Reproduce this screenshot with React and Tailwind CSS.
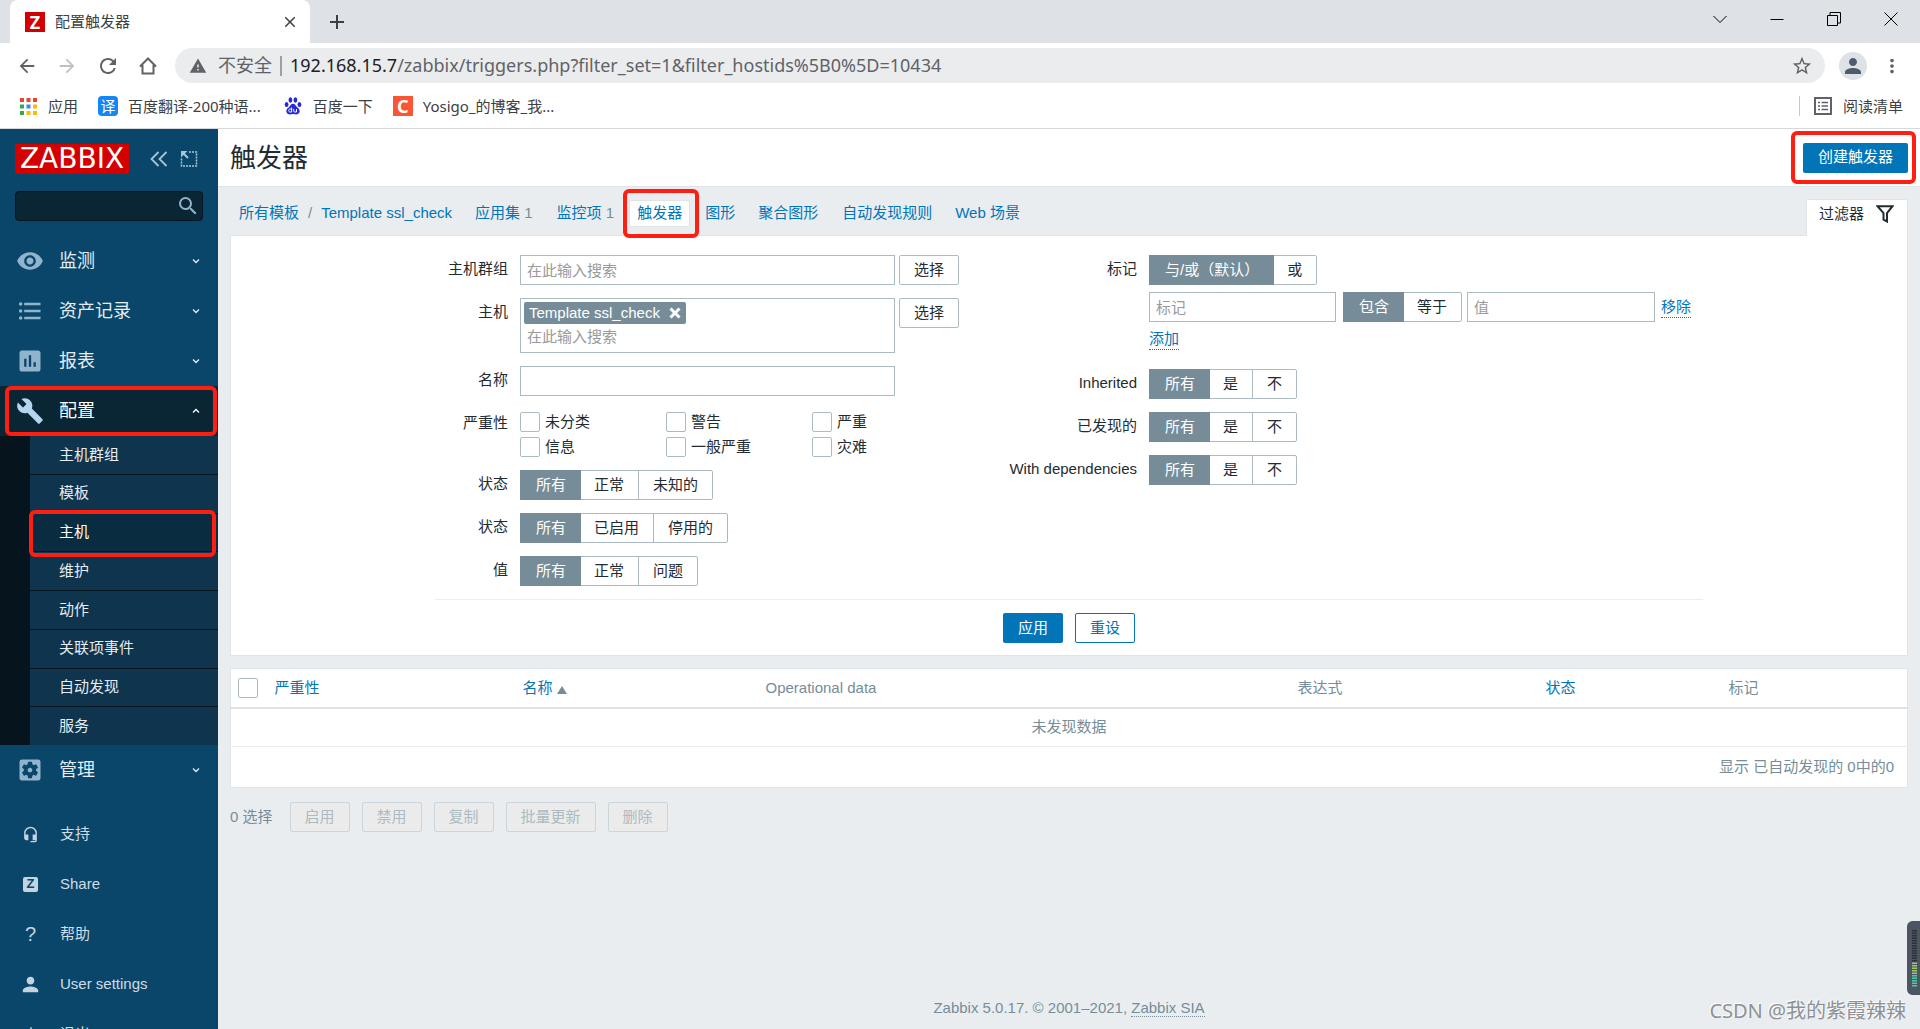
import { useState } from 'react';
import {
  MdAdd, MdArrowBack, MdArrowForward, MdAssessment, MdBuild, MdClose, MdFormatListBulleted,
  MdHeadsetMic, MdMoreVert, MdPerson, MdPowerSettingsNew, MdRefresh, MdSearch,
  MdSettingsApplications, MdStarBorder, MdVisibility, MdWarning,
} from 'react-icons/md';

const UI_FONT = "font-['Noto_Sans','Noto_Sans_CJK_SC',sans-serif]";
const PAGE_FONT = "font-['Liberation_Sans','Noto_Sans_CJK_SC',sans-serif]";

const SUBMENU = ['主机群组', '模板', '主机', '维护', '动作', '关联项事件', '自动发现', '服务'];

/* ---------- icons ---------- */

function HomeIcon() {
  return (
    <svg className="size-5" viewBox="0 0 20 20" fill="none" stroke="currentColor" strokeWidth="2">
      <path d="M2 10.500 10 2.500l8 8M4.500 9v8.500h11V9" />
    </svg>
  );
}

function AppsIcon() {
  const colors = ['#ea4335', '#ea4335', '#ea4335', '#34a853', '#4285f4', '#fbbc04', '#34a853', '#fbbc04', '#fbbc04'];
  return (
    <svg className="size-[17px]" viewBox="0 0 17 17">
      {colors.map((c, i) => (
        <rect key={i} x={(i % 3) * 6.5} y={Math.floor(i / 3) * 6.5} width="4" height="4" fill={c} />
      ))}
    </svg>
  );
}

function PawIcon() {
  return (
    <svg className="size-[18px]" viewBox="0 0 18 18" fill="#2529d8">
      <ellipse cx="2.6" cy="7.4" rx="1.9" ry="2.5" />
      <ellipse cx="6.4" cy="3" rx="1.9" ry="2.7" />
      <ellipse cx="11.4" cy="3" rx="1.9" ry="2.7" />
      <ellipse cx="15.4" cy="7.6" rx="1.9" ry="2.5" />
      <path d="M9 6.8c1.9 0 2.6 1.7 3.7 3 1.200 1.300 3 2.100 3 4.300 0 2-1.400 3.300-3.200 3.300-1.300 0-2.200-.4-3.500-.4s-2.200.4-3.500.4c-1.800 0-3.200-1.300-3.200-3.300 0-2.200 1.800-3 3-4.300 1.100-1.300 1.800-3 3.700-3z" />
      <path d="M7.600 10.500v4.500H6.200c-.9 0-1.500-.6-1.500-1.500s.6-1.500 1.500-1.500h1.400M9.700 12v1.900c0 .7.4 1.100 1 1.100h1.800v-3" fill="none" stroke="#fff" strokeWidth="1" />
    </svg>
  );
}

function ReadingListIcon() {
  return (
    <svg className="size-[18px] text-[#5f6368]" viewBox="0 0 18 18" fill="none" stroke="currentColor" strokeWidth="2">
      <path d="M1 1h16v16H1z" />
      <path d="M4 5.500h2M4 9h2M4 12.500h2M7.500 5.500h6.500M7.500 9h6.500M7.500 12.500h6.500" strokeWidth="1.500" />
    </svg>
  );
}

// Arrow pointing out of a dotted frame
function KioskIcon() {
  return (
    <svg className="size-[18px]" viewBox="0 0 18 18" fill="none" stroke="currentColor" strokeWidth="1.500">
      <path d="M9 2h7.500v14H1.500V8.500" strokeDasharray="2 1" />
      <path d="M3 3l5 5" strokeWidth="2" />
      <path d="M1 1h6.500L1 7.500z" fill="currentColor" stroke="none" />
    </svg>
  );
}

function CollapseIcon() {
  return (
    <svg className="size-[18px]" viewBox="0 0 18 18" fill="none" stroke="currentColor" strokeWidth="1.800">
      <path d="M8.500 2 1.500 9l7 7M16.500 2l-7 7 7 7" />
    </svg>
  );
}

function Caret({ up }) {
  return (
    <svg className="w-2 h-[6px]" viewBox="0 0 8 6" fill="none" stroke="currentColor" strokeWidth="1.300">
      <path d={up ? 'M1 4.500l3-3 3 3' : 'M1 1.500l3 3 3-3'} />
    </svg>
  );
}

function FunnelIcon() {
  return (
    <svg className="size-[18px]" viewBox="0 0 18 18" fill="none" stroke="#1f2c33" strokeWidth="2">
      <path d="M1.500 1.200h15l-5.500 7v8.300l-3.500-1.800V8.200z" />
    </svg>
  );
}

/* ---------- small pieces ---------- */

// Red frame around its relative parent
function Mark({ className }) {
  return <span className={`absolute border-4 border-[#ff1e12] rounded-md pointer-events-none z-10 ${className}`} />;
}

function Segmented({ name, label, options }) {
  const [value, setValue] = useState(options[0]);
  return (
    <div role="radiogroup" aria-label={label} className="inline-flex h-[30px] rounded-xs border border-[#acbbc2] bg-white">
      {options.map((o, i) => (
        <label
          key={o}
          className={`relative flex items-center pr-[14px] whitespace-nowrap ${i > 0 ? 'pl-[14px]' : 'pl-[15px]'} ${i > 1 ? 'border-l border-[#acbbc2]' : ''} ${value === o ? 'bg-[#768d99] text-white outline outline-[#768d99]' : ''}`}
        >
          <input type="radio" name={name} className="sr-only" checked={value === o} onChange={() => setValue(o)} />
          {o}
        </label>
      ))}
    </div>
  );
}

function Row({ label, htmlFor, labelWidth, className = '', children }) {
  return (
    <div className={`flex gap-3 ${className}`}>
      <label htmlFor={htmlFor} className={`${labelWidth} shrink-0 text-right leading-[28px] whitespace-nowrap`}>{label}</label>
      <div className="grow">{children}</div>
    </div>
  );
}

const CHECKBOX = 'appearance-none shrink-0 size-5 rounded-xs border border-[#acbbc2] bg-white checked:bg-[#768d99]';
const INPUT = 'h-[30px] border border-[#acbbc2] bg-white px-[6px] placeholder:text-[#9a9a9a] outline-none';

function SelectButton() {
  return <button type="button" className="h-[30px] w-[60px] shrink-0 rounded-xs border border-[#acbbc2] bg-white">选择</button>;
}

/* ---------- browser chrome ---------- */

function Browser() {
  return (
    <header className={`${UI_FONT} shrink-0 bg-white text-[15px] text-[#3c4043]`}>
      <div className="flex h-[43px] bg-[#dee1e6] pl-[10px]">
        <div className="flex w-[300px] items-center rounded-t-lg bg-white pl-[15px] pr-[11px]">
          <span className="flex size-5 items-center justify-center bg-[#d40000] text-lg font-bold text-white">Z</span>
          <span className="ml-[10px] grow">配置触发器</span>
          <button aria-label="关闭标签页"><MdClose className="size-[18px]" /></button>
        </div>
        <button aria-label="新标签页" className="ml-[15px]"><MdAdd className="size-6" /></button>
        <div className="ml-auto flex items-center pb-[6px] text-black">
          <button aria-label="搜索标签页" className="flex w-[57px] justify-center">
            <svg className="size-[14px]" viewBox="0 0 14 14" fill="none" stroke="currentColor"><path d="M.500 4l6.500 6.500L13.500 4" /></svg>
          </button>
          <button aria-label="最小化" className="flex w-[57px] justify-center">
            <svg className="size-[14px]" viewBox="0 0 14 14" stroke="currentColor"><path d="M.500 7.500h13" /></svg>
          </button>
          <button aria-label="还原" className="flex w-[57px] justify-center">
            <svg className="size-[14px]" viewBox="0 0 14 14" fill="none" stroke="currentColor"><path d="M.500 3.500h10v10H.500zM3 3.500v-3h10.500V11h-3" /></svg>
          </button>
          <button aria-label="关闭" className="flex w-[58px] justify-center">
            <svg className="size-[14px]" viewBox="0 0 14 14" stroke="currentColor"><path d="M.500.500l13 13M13.500.500l-13 13" /></svg>
          </button>
        </div>
      </div>

      <div className="flex h-[45px] items-center pl-4 pr-[17px] text-[#5f6368]">
        <div className="flex w-[159px] items-center gap-[18px]">
          <button aria-label="后退"><MdArrowBack className="size-[22px]" /></button>
          <button aria-label="前进" className="text-[#bdc1c6]"><MdArrowForward className="size-[22px]" /></button>
          <button aria-label="重新加载"><MdRefresh className="size-6" /></button>
          <button aria-label="主页"><HomeIcon /></button>
        </div>
        <div className="flex h-[35px] grow items-center rounded-full bg-[#ebecee] pl-[14px] pr-3 text-[18px]">
          <MdWarning className="size-[18px]" />
          <span className="ml-[11px]">不安全</span>
          <span className="mx-[8px] h-5 w-[2px] bg-[#9aa0a6]" />
          <span className="grow"><span className="text-[#202124]">192.168.15.7</span>/zabbix/triggers.php?filter_set=1&amp;filter_hostids%5B0%5D=10434</span>
          <button aria-label="为此标签页添加书签"><MdStarBorder className="size-[22px]" /></button>
        </div>
        <span className="ml-[14px] flex size-7 items-center justify-center rounded-full bg-[#dee1e6] text-[#4e5b6e]"><MdPerson className="size-6" /></span>
        <button aria-label="更多" className="ml-[14px]"><MdMoreVert className="size-[22px]" /></button>
      </div>

      <nav className="flex h-[41px] items-center border-b border-[#d5d8dc] pb-1 pl-5 pr-[17px]">
        <a href="#apps" className="flex items-center gap-[11px]"><AppsIcon />应用</a>
        <a href="#fanyi" className="ml-5 flex items-center gap-[10px]">
          <span className="flex size-5 items-center justify-center rounded-sm bg-[#1487f5] text-white">译</span>百度翻译-200种语...
        </a>
        <a href="#baidu" className="ml-[23px] flex items-center gap-[11px]"><PawIcon />百度一下</a>
        <a href="#blog" className="ml-5 flex items-center gap-[10px]">
          <span className="flex size-5 items-center justify-center bg-[#fc5531] text-lg font-bold text-white">C</span>Yosigo_的博客_我...
        </a>
        <span className="ml-auto mr-[14px] h-5 w-px bg-[#c4c7cc]" />
        <button className="flex items-center gap-[11px]"><ReadingListIcon />阅读清单</button>
      </nav>
    </header>
  );
}

/* ---------- sidebar ---------- */

function MenuItem({ icon: Icon, label, open }) {
  return (
    <a href={`#${label}`} className={`relative flex h-[50px] shrink-0 items-center pl-4 pr-[18px] text-[18px] ${open ? 'bg-[#0a2635] text-white' : 'text-[#e5edf2]'}`}>
      <Icon className={`size-7 ${open ? 'text-[#b5d5ee]' : 'text-[#8fb4cc]'}`} />
      <span className="ml-[15px] grow">{label}</span>
      <Caret up={open} />
      {open && <Mark className="inset-y-0 left-[5px] right-[1px]" />}
    </a>
  );
}

function UserItem({ icon, label }) {
  return (
    <a href={`#${label}`} className="flex h-[50px] shrink-0 items-center pl-[21px] text-[#d0dce4]">
      <span className="flex size-[19px] items-center justify-center text-[#c3d4df]">{icon}</span>
      <span className="ml-5">{label}</span>
    </a>
  );
}

function Sidebar() {
  return (
    <aside className="flex w-[218px] shrink-0 flex-col overflow-hidden bg-[#0a466a]">
      <div className="flex items-center px-[15px] pt-[15px] text-[#a9c5d8]">
        <a href="#home" className="flex h-[30px] w-[114px] items-center justify-center bg-[#d40000] font-['DejaVu_Sans'] text-[28px] leading-none text-white">ZABBIX</a>
        <button aria-label="Collapse" className="ml-[21px]"><CollapseIcon /></button>
        <button aria-label="Hide" className="ml-[12px]"><KioskIcon /></button>
      </div>
      <div className="mx-[15px] mt-[17px] mb-[15px] flex h-[30px] shrink-0 items-center rounded border border-[#04141d] bg-[#0a2635] pr-[2px]">
        <input aria-label="搜索" className="min-w-0 grow bg-transparent px-2 text-white outline-none" />
        <button aria-label="搜索按钮"><MdSearch className="size-6 text-[#8fb4cc]" /></button>
      </div>
      <MenuItem icon={MdVisibility} label="监测" />
      <MenuItem icon={MdFormatListBulleted} label="资产记录" />
      <MenuItem icon={MdAssessment} label="报表" />
      <MenuItem icon={MdBuild} label="配置" open />
      <ul className="flex h-[309px] shrink-0 flex-col border-l-[30px] border-[#05141d] bg-[#0f344d]">
        {SUBMENU.map((item) => (
          <li key={item} className={`relative flex-1 border-b border-[#05141d] last:border-b-0 ${item === '主机' ? 'bg-[#0a2c40] text-white' : 'text-[#e5edf2]'}`}>
            <a href={`#${item}`} className="flex h-full items-center pl-[29px]">{item}</a>
            {item === '主机' && <Mark className="-top-1 -bottom-[6px] -left-[1px] right-[2px]" />}
          </li>
        ))}
      </ul>
      <MenuItem icon={MdSettingsApplications} label="管理" />
      <div className="mt-[14px] flex flex-col">
        <UserItem icon={<MdHeadsetMic className="size-[17px]" />} label="支持" />
        <UserItem icon={<span className="flex size-[15px] items-center justify-center rounded-xs bg-[#c3d4df] text-[13px] font-bold text-[#0a466a]">Z</span>} label="Share" />
        <UserItem icon={<span className="text-[20px]">?</span>} label="帮助" />
        <UserItem icon={<MdPerson className="size-[23px] shrink-0" />} label="User settings" />
        <UserItem icon={<MdPowerSettingsNew className="size-[18px]" />} label="退出" />
      </div>
    </aside>
  );
}

/* ---------- main area ---------- */

function Breadcrumbs() {
  return (
    <nav className="flex h-[29px] items-center pl-[9px] text-[#0275b8]">
      <a href="#templates">所有模板</a>
      <span className="mx-[9px] text-[#768d99]">/</span>
      <a href="#template">Template ssl_check</a>
      <a href="#apps" className="ml-[23px]">应用集 <span className="text-[#768d99]">1</span></a>
      <a href="#items" className="ml-6">监控项 <span className="text-[#768d99]">1</span></a>
      <a href="#triggers" className="relative ml-[15px] flex h-[27px] items-center rounded-xs border border-[#dfe4e7] bg-white px-[7px]">
        触发器
        <Mark className="-inset-y-[12px] -left-[7px] -right-[10px]" />
      </a>
      <a href="#graphs" className="ml-[15px]">图形</a>
      <a href="#screens" className="ml-[23px]">聚合图形</a>
      <a href="#discovery" className="ml-6">自动发现规则</a>
      <a href="#web" className="ml-[23px]">Web 场景</a>
    </nav>
  );
}

function FilterPanel() {
  const left = 'w-[73px]';
  const right = 'w-[178px]';
  return (
    <form className="border border-[#dfe4e7] bg-white" onSubmit={(e) => e.preventDefault()}>
      <div className="mx-auto max-w-[1268px]">
        <div className="flex items-start pt-[19px] pb-[13px]">
          <div className="flex w-[524px] shrink-0 flex-col gap-[13px]">
            <Row label="主机群组" htmlFor="groups" labelWidth={left}>
              <div className="flex gap-1">
                <input id="groups" placeholder="在此输入搜索" className={`${INPUT} w-[375px]`} />
                <SelectButton />
              </div>
            </Row>
            <Row label="主机" htmlFor="hosts" labelWidth={left}>
              <div className="flex gap-1">
                <div className="flex h-[55px] w-[375px] flex-col items-start border border-[#acbbc2] p-[3px]">
                  <span className="flex h-[22px] items-center rounded-xs bg-[#768d99] px-[5px] text-white">
                    Template ssl_check
                    <button type="button" aria-label="删除" className="ml-[9px]">
                      <svg className="size-3" viewBox="0 0 12 12" stroke="currentColor" strokeWidth="3"><path d="M1.500 1.500l9 9M10.500 1.500l-9 9" /></svg>
                    </button>
                  </span>
                  <input id="hosts" placeholder="在此输入搜索" className="h-[27px] w-full px-[3px] outline-none placeholder:text-[#9a9a9a]" />
                </div>
                <SelectButton />
              </div>
            </Row>
            <Row label="名称" htmlFor="name" labelWidth={left}>
              <input id="name" className={`${INPUT} block w-[375px]`} />
            </Row>
            <Row label="严重性" labelWidth={left}>
              <div className="grid w-[438px] grid-cols-3 gap-y-[5px] pt-[3px]">
                {['未分类', '警告', '严重', '信息', '一般严重', '灾难'].map((s) => (
                  <label key={s} className="flex h-5 items-center gap-[5px]">
                    <input type="checkbox" className={CHECKBOX} />{s}
                  </label>
                ))}
              </div>
            </Row>
            <Row label="状态" labelWidth={left}><Segmented name="state" label="状态" options={['所有', '正常', '未知的']} /></Row>
            <Row label="状态" labelWidth={left}><Segmented name="status" label="状态" options={['所有', '已启用', '停用的']} /></Row>
            <Row label="值" labelWidth={left}><Segmented name="value" label="值" options={['所有', '正常', '问题']} /></Row>
          </div>

          <div className="flex flex-col gap-[13px]">
            <Row label="标记" labelWidth={right}>
              <div className="flex flex-col items-start gap-[7px]">
                <Segmented name="evaltype" label="标记" options={['与/或（默认）', '或']} />
                <div className="flex items-center">
                  <input aria-label="标记" placeholder="标记" className={`${INPUT} w-[187px]`} />
                  <div className="ml-[7px] mr-[5px] flex"><Segmented name="operator" label="运算符" options={['包含', '等于']} /></div>
                  <input aria-label="值" placeholder="值" className={`${INPUT} w-[188px]`} />
                  <button type="button" className="ml-[6px] border-b border-dotted border-[#0275b8] leading-5 text-[#0275b8]">移除</button>
                </div>
                <button type="button" className="border-b border-dotted border-[#0275b8] leading-5 text-[#0275b8]">添加</button>
              </div>
            </Row>
            <div className="flex flex-col gap-[13px] pt-[6px]">
              <Row label="Inherited" labelWidth={right}><Segmented name="inherited" label="Inherited" options={['所有', '是', '不']} /></Row>
              <Row label="已发现的" labelWidth={right}><Segmented name="discovered" label="已发现的" options={['所有', '是', '不']} /></Row>
              <Row label="With dependencies" labelWidth={right}><Segmented name="dependent" label="With dependencies" options={['所有', '是', '不']} /></Row>
            </div>
          </div>
        </div>
        <div className="flex justify-center gap-3 border-t border-[#ebeef0] pt-[13px] pb-3">
          <button className="h-[30px] w-[60px] rounded-xs bg-[#0275b8] text-white">应用</button>
          <button type="reset" className="h-[30px] w-[60px] rounded-xs border border-[#0275b8] text-[#0275b8]">重设</button>
        </div>
      </div>
    </form>
  );
}

function TriggerTable() {
  return (
    <table className="mt-3 w-full table-fixed border border-[#dfe4e7] bg-white text-left text-[#768d99]">
      <thead>
        <tr className="h-[39px] border-b-2 border-[#dce2e5]">
          <th className="w-[44px] pl-[7px]"><input type="checkbox" aria-label="全选" className={`${CHECKBOX} block`} /></th>
          <th className="w-[248px] font-normal"><a href="#sev" className="text-[#0275b8]">严重性</a></th>
          <th className="w-[243px] font-normal">
            <a href="#sort" className="flex items-center gap-1 text-[#0275b8]">
              名称
              <svg className="mt-1 h-2 w-[10px]" viewBox="0 0 10 8" fill="#768d99"><path d="M5 0l5 8H0z" /></svg>
            </a>
          </th>
          <th className="w-[532px] font-normal">Operational data</th>
          <th className="w-[248px] font-normal">表达式</th>
          <th className="w-[183px] font-normal"><a href="#st" className="text-[#0275b8]">状态</a></th>
          <th className="font-normal">标记</th>
        </tr>
      </thead>
      <tbody>
        <tr className="h-[39px] border-b border-[#ebeef0]"><td colSpan={7} className="text-center">未发现数据</td></tr>
        <tr className="h-[41px]"><td colSpan={7} className="pr-[13px] text-right">显示 已自动发现的 0中的0</td></tr>
      </tbody>
    </table>
  );
}

function VolumeMeter() {
  return (
    <svg className="absolute right-0 bottom-[34px] z-10 h-[74px] w-[13px]" viewBox="0 0 13 74">
      <path d="M13 0H5Q0 1 0 6v62q0 5 5 6h8z" fill="#4d5563" />
      {Array.from({ length: 23 }, (_, i) => (
        <rect key={i} x="5" y={9 + i * 2.500} width="5" height="1.500" fill={i < 13 ? '#2c303b' : i < 18 ? '#9bc96b' : '#4fc9a4'} />
      ))}
    </svg>
  );
}

export default function App() {
  return (
    <div className="flex h-screen flex-col overflow-hidden">
      <Browser />
      <div className={`${PAGE_FONT} relative flex min-h-0 grow text-[15px] text-[#1f2c33]`}>
        <Sidebar />
        <main className="flex min-w-0 grow flex-col bg-[#e9edf0]">
          <div className="flex h-[58px] shrink-0 items-center justify-between border-b border-[#dfe4e7] bg-white pl-3 pr-3">
            <h1 className="pt-[2px] text-[26px]">触发器</h1>
            <div className="relative flex">
              <button className="h-[30px] w-[105px] rounded-xs bg-[#0275b8] text-white">创建触发器</button>
              <Mark className="-top-3 -bottom-[11px] -left-3 -right-2" />
            </div>
          </div>
          <div className="flex grow flex-col px-3 pt-3">
            <div className="flex justify-between">
              <Breadcrumbs />
              <button className="relative -mb-px flex h-[37px] w-[102px] items-center gap-3 rounded-t-xs border border-b-0 border-[#dfe4e7] bg-white pb-2 pl-3">
                过滤器<FunnelIcon />
              </button>
            </div>
            <FilterPanel />
            <TriggerTable />
            <div className="mt-[14px] flex items-center gap-3 text-[#768d99]">
              <span className="mr-[5px]">0 选择</span>
              {['启用', '禁用', '复制', '批量更新', '删除'].map((b) => (
                <button key={b} disabled className="h-[30px] rounded-xs border border-[#ccd5d9] bg-[#ebebeb] px-[14px] text-[#acbbc2]">{b}</button>
              ))}
            </div>
            <footer className="mt-auto pb-[10px] text-center text-[#768d99]">
              Zabbix 5.0.17. © 2001–2021, <a href="#sia" className="border-b border-dotted border-[#768d99]">Zabbix SIA</a>
            </footer>
          </div>
        </main>
        <VolumeMeter />
        <span className={`${UI_FONT} absolute right-[14px] bottom-1 text-[20px] leading-7 text-[#8e9193] [text-shadow:-1px_-1px_0_#fff]`}>CSDN @我的紫霞辣辣</span>
      </div>
    </div>
  );
}
